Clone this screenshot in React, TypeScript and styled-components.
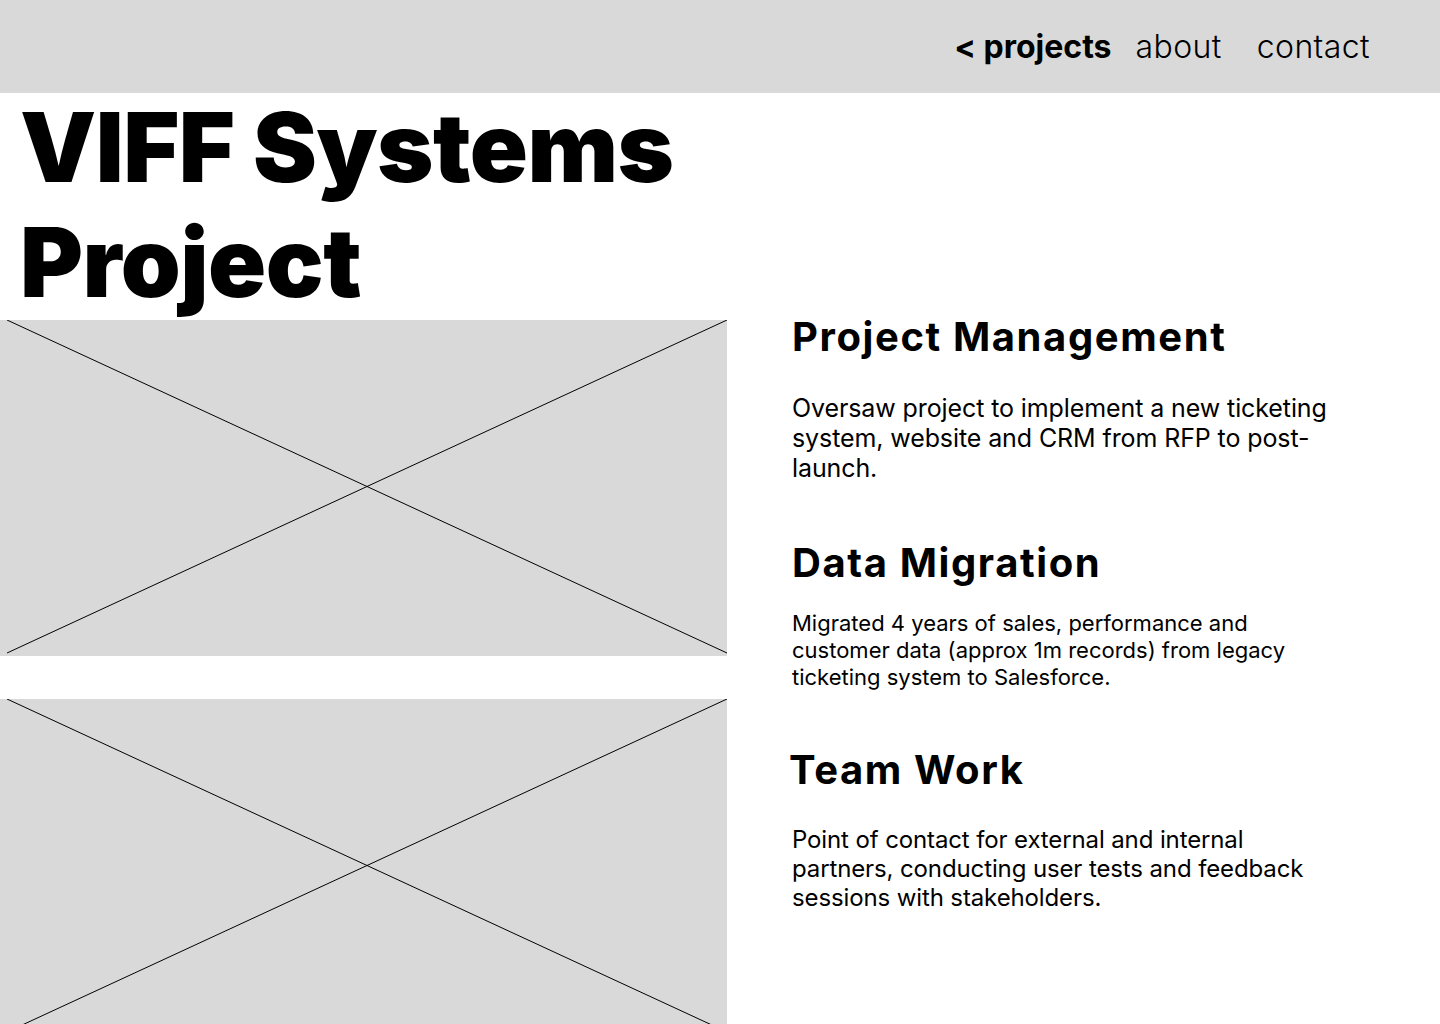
import React from "react";
import styled, { createGlobalStyle } from "styled-components";

const Global = createGlobalStyle`
  html, body { margin: 0; padding: 0; background: #ffffff; }
  body {
    font-family: Inter, "Noto Sans", sans-serif;
    color: #000;
    font-optical-sizing: none;
    font-variation-settings: "opsz" 14;
  }
  * { box-sizing: border-box; }
`;

const Header = styled.header`
  height: 93px;
  background: #d9d9d9;
  display: flex;
  align-items: center;
  justify-content: flex-end;
  padding-right: 70px;
`;

const Nav = styled.nav`
  display: flex;
  align-items: center;
`;

const NavLink = styled.a<{ $active?: boolean; $gap?: number }>`
  font-size: 32px;
  font-weight: ${(p) => (p.$active ? 700 : 300)};
  letter-spacing: ${(p) => (p.$active ? "0" : "0.4px")};
  color: #000;
  text-decoration: none;
  margin-left: ${(p) => p.$gap ?? 0}px;
`;

const Main = styled.main`
  display: grid;
  grid-template-columns: 727px 1fr;
  column-gap: 65px;
`;

const LeftCol = styled.div`
  display: flex;
  flex-direction: column;
`;

const Title = styled.h1`
  margin: -3px 0 0;
  padding-left: 20px;
  font-size: 96px;
  line-height: 115px;
  font-weight: 900;
  letter-spacing: -0.5px;
  height: 230px;
`;

const Images = styled.div`
  display: flex;
  flex-direction: column;
  gap: 43px;
`;

const Placeholder = styled.div`
  width: 727px;
  height: 336px;
  background: #d9d9d9;
  svg { display: block; }
`;

const RightCol = styled.div`
  display: flex;
  flex-direction: column;
  padding-top: 220px;
`;

const Section = styled.section<{ $top: number }>`
  margin-top: ${(p) => p.$top}px;
`;

const Heading = styled.h2<{ $shift?: number }>`
  margin: 0;
  font-size: 40px;
  font-weight: 700;
  line-height: 48px;
  letter-spacing: 1.6px;
  margin-left: ${(p) => p.$shift ?? 0}px;
`;

const Body = styled.p<{ $size: number; $gap: number; $lh: string; $ls?: number }>`
  margin: ${(p) => p.$gap}px 0 0;
  width: 550px;
  font-size: ${(p) => p.$size}px;
  line-height: ${(p) => p.$lh};
  letter-spacing: ${(p) => p.$ls ?? 0}px;
  font-weight: 400;
`;

const ImageBox = () => (
  <Placeholder>
    <svg width="727" height="336" viewBox="0 0 727 336">
      <line x1="7" y1="0" x2="727" y2="333" stroke="#000" strokeWidth="1" />
      <line x1="7" y1="333" x2="727" y2="0" stroke="#000" strokeWidth="1" />
    </svg>
  </Placeholder>
);

export default function App() {
  return (
    <>
      <Global />
      <Header>
        <Nav>
          <NavLink $active href="#">&lt; projects</NavLink>
          <NavLink $gap={24} href="#">about</NavLink>
          <NavLink $gap={35} href="#">contact</NavLink>
        </Nav>
      </Header>
      <Main>
        <LeftCol>
          <Title>
            VIFF Systems
            <br />
            Project
          </Title>
          <Images>
            <ImageBox />
            <ImageBox />
          </Images>
        </LeftCol>
        <RightCol>
          <Section $top={0}>
            <Heading>Project Management</Heading>
            <Body $size={25} $lh="30px" $gap={32} $ls={-0.1}>
              Oversaw project to implement a new ticketing system, website and CRM from RFP to post-launch.
            </Body>
          </Section>
          <Section $top={56}>
            <Heading>Data Migration</Heading>
            <Body $size={22} $lh="27px" $gap={23}>
              Migrated 4 years of sales, performance and customer data (approx 1m records) from legacy ticketing system to Salesforce.
            </Body>
          </Section>
          <Section $top={55}>
            <Heading $shift={-3}>Team Work</Heading>
            <Body $size={24} $lh="29px" $gap={31} $ls={-0.12}>
              Point of contact for external and internal partners, conducting user tests and feedback sessions with stakeholders.
            </Body>
          </Section>
        </RightCol>
      </Main>
    </>
  );
}
